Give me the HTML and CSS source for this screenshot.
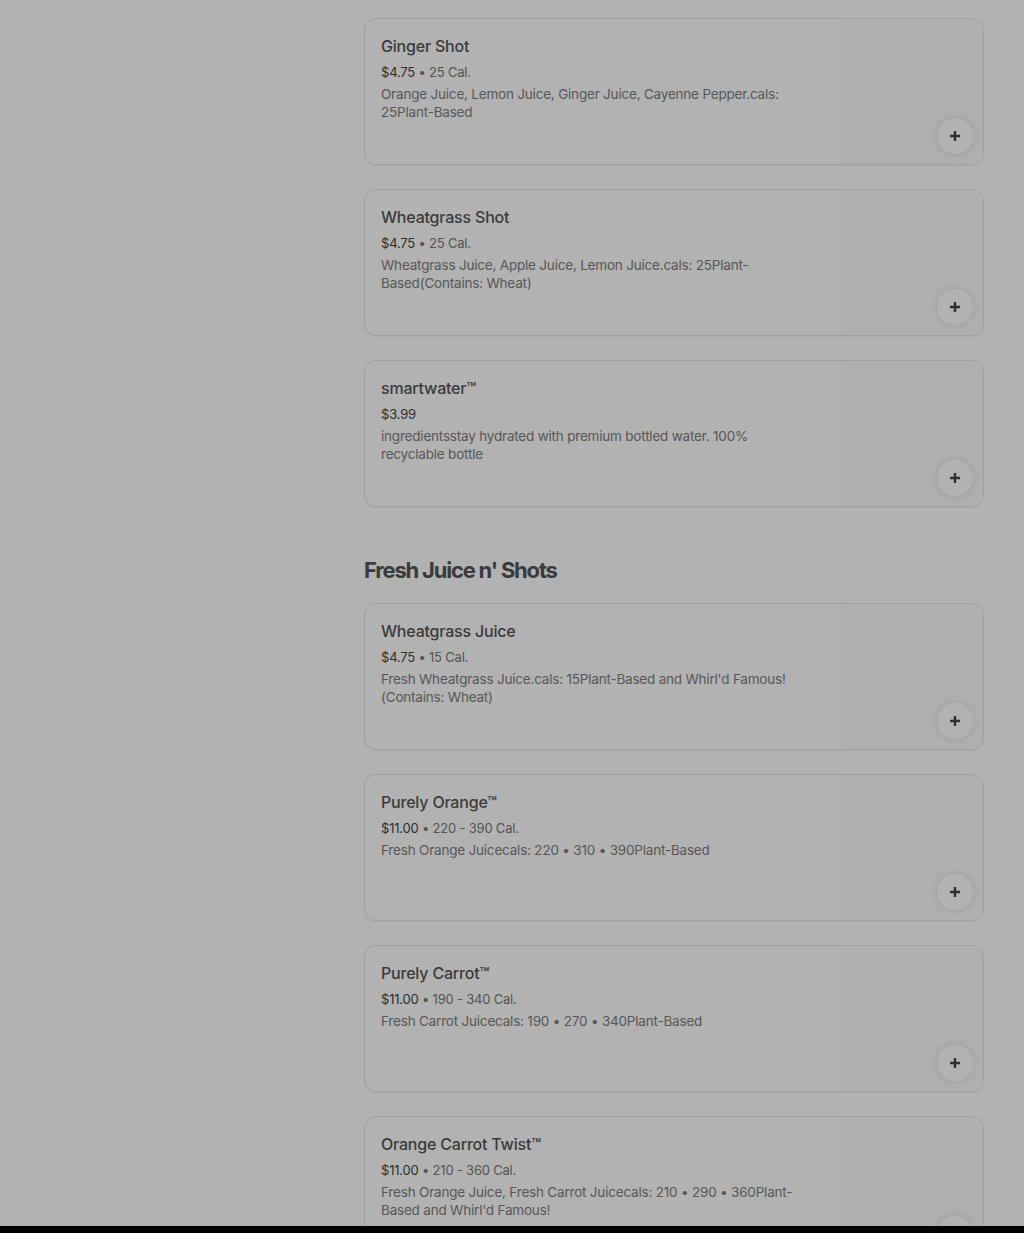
FILE: index.html
```html
<!DOCTYPE html>
<html>

<head>
  <meta charset="UTF-8">
  <meta name="viewport" content="width=device-width, initial-scale=1.0">
  <title>Menu</title>
  <link rel="stylesheet" href="styles.css">
</head>

<body>
  <div class="page">
    <aside class="side"></aside>
    <main class="menu">
      <section class="group">
        <ul class="items">
          <li class="item">
            <div class="info">
              <h3>Ginger Shot</h3>
              <p class="price">$4.75 <span>• 25 Cal.</span></p>
              <p class="desc">Orange Juice, Lemon Juice, Ginger Juice, Cayenne Pepper.cals: 25Plant-Based</p>
            </div>
            <div class="thumb"></div>
            <button class="add"><svg viewBox="0 0 12 12"><path d="M6 1v10M1 6h10" /></svg></button>
          </li>
          <li class="item">
            <div class="info">
              <h3>Wheatgrass Shot</h3>
              <p class="price">$4.75 <span>• 25 Cal.</span></p>
              <p class="desc">Wheatgrass Juice, Apple Juice, Lemon Juice.cals: 25Plant-Based(Contains: Wheat)</p>
            </div>
            <div class="thumb"></div>
            <button class="add"><svg viewBox="0 0 12 12"><path d="M6 1v10M1 6h10" /></svg></button>
          </li>
          <li class="item">
            <div class="info">
              <h3>smartwater™</h3>
              <p class="price">$3.99</p>
              <p class="desc">ingredientsstay hydrated with premium bottled water. 100% recyclable bottle</p>
            </div>
            <div class="thumb"></div>
            <button class="add"><svg viewBox="0 0 12 12"><path d="M6 1v10M1 6h10" /></svg></button>
          </li>
        </ul>
      </section>
      <section class="group">
        <h2>Fresh Juice n' Shots</h2>
        <ul class="items">
          <li class="item">
            <div class="info">
              <h3>Wheatgrass Juice</h3>
              <p class="price">$4.75 <span>• 15 Cal.</span></p>
              <p class="desc">Fresh Wheatgrass Juice.cals: 15Plant-Based and Whirl'd Famous! (Contains: Wheat)</p>
            </div>
            <div class="thumb"></div>
            <button class="add"><svg viewBox="0 0 12 12"><path d="M6 1v10M1 6h10" /></svg></button>
          </li>
          <li class="item">
            <div class="info">
              <h3>Purely Orange™</h3>
              <p class="price">$11.00 <span>• 220 - 390 Cal.</span></p>
              <p class="desc">Fresh Orange Juicecals: 220 • 310 • 390Plant-Based</p>
            </div>
            <div class="thumb"></div>
            <button class="add"><svg viewBox="0 0 12 12"><path d="M6 1v10M1 6h10" /></svg></button>
          </li>
          <li class="item">
            <div class="info">
              <h3>Purely Carrot™</h3>
              <p class="price">$11.00 <span>• 190 - 340 Cal.</span></p>
              <p class="desc">Fresh Carrot Juicecals: 190 • 270 • 340Plant-Based</p>
            </div>
            <div class="thumb"></div>
            <button class="add"><svg viewBox="0 0 12 12"><path d="M6 1v10M1 6h10" /></svg></button>
          </li>
          <li class="item">
            <div class="info">
              <h3>Orange Carrot Twist™</h3>
              <p class="price">$11.00 <span>• 210 - 360 Cal.</span></p>
              <p class="desc">Fresh Orange Juice, Fresh Carrot Juicecals: 210 • 290 • 360Plant-Based and Whirl'd Famous!</p>
            </div>
            <div class="thumb"></div>
            <button class="add"><svg viewBox="0 0 12 12"><path d="M6 1v10M1 6h10" /></svg></button>
          </li>
        </ul>
      </section>
    </main>
  </div>
  <div class="backdrop"></div>
  <div class="sheet-edge"></div>
</body>

</html>
```

FILE: styles.css
```css
* {
  padding: 0;
  margin: 0;
  box-sizing: border-box;
}

body {
  overflow: hidden;
  background: #fff;
  font-family: Inter, "Liberation Sans", sans-serif;
}

.page {
  display: grid;
  grid-template-columns: 364px 620px;
  padding-top: 18px;
}

.items {
  list-style: none;
  display: flex;
  flex-direction: column;
  gap: 24px;
}

.group + .group {
  margin-top: 47px;
}

.group>h2 {
  font-size: 22px;
  line-height: 32px;
  font-weight: 700;
  letter-spacing: -1.2px;
  color: #555;
  margin-bottom: 17px;
}

.item {
  position: relative;
  height: 147px;
  display: flex;
  border: 1px solid #e6e6e6;
  border-radius: 12px;
  overflow: hidden;
  box-shadow: 0 1px 2px rgba(0, 0, 0, .05);
}

.info {
  flex: 1;
  padding: 16px 40px 16px 16px;
}

.info>h3 {
  font-size: 16px;
  line-height: 22px;
  font-weight: 500;
  letter-spacing: -.2px;
  color: #555;
}

.price {
  margin-top: 5px;
  font-size: 13px;
  line-height: 20px;
  color: #444;
  letter-spacing: -.2px;
}

.price>span {
  color: #7a7a7a;
}

.desc {
  margin-top: 3px;
  font-size: 13.5px;
  line-height: 18px;
  color: #7e7e7e;
  letter-spacing: -.2px;
}

.thumb {
  width: 142px;
  background: #fbfbfb;
}

.add {
  position: absolute;
  right: 10px;
  bottom: 10px;
  width: 36px;
  height: 36px;
  border: none;
  border-radius: 18px;
  background: #fff;
  box-shadow: 0 0 6px 2px rgba(0, 0, 0, .07);
  display: flex;
  justify-content: center;
  align-items: center;
}

.add>svg {
  width: 12px;
  height: 12px;
  stroke: #444;
  stroke-width: 2.4;
  fill: none;
}

.backdrop {
  position: fixed;
  top: 0;
  left: 0;
  width: 100vw;
  height: 100vh;
  background: rgba(0, 0, 0, .3);
}

.sheet-edge {
  position: fixed;
  left: 0;
  bottom: 0;
  width: 100vw;
  height: 7px;
  background: #000;
}
```
